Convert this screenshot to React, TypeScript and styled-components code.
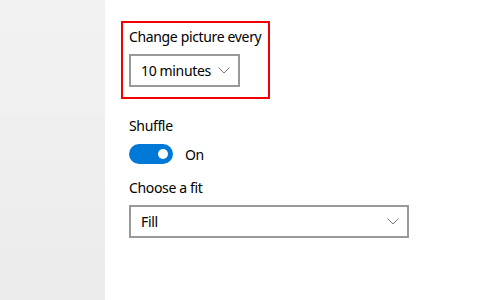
import React from "react"
import styled, { createGlobalStyle } from "styled-components"

const Global = createGlobalStyle`
  body {
    margin: 0;
    font-family: "Noto Sans", "Open Sans", sans-serif;
    letter-spacing: -0.35px;
    color: #000;
  }
`
const Page = styled.div`
  display: flex;
  width: 500px;
  height: 300px;
  overflow: hidden;
  background: #fff;
`
const Sidebar = styled.div`
  width: 105px;
  flex-shrink: 0;
  background: linear-gradient(180deg, #f2f2f3 0%, #eeeeef 60%, #ebebec 100%);
`
const Content = styled.div`
  display: flex;
  flex-direction: column;
  align-items: flex-start;
  padding: 21px 0 0 24px;
`
const FocusGroup = styled.div`
  display: flex;
  flex-direction: column;
  align-items: flex-start;
  box-sizing: border-box;
  width: 149px;
  margin-left: -8px;
  border: 2px solid #f00000;
  padding: 4px 0 10px 6px;
`
const Label = styled.div<{ $top?: number }>`
  font-size: 14px;
  line-height: 20px;
  white-space: nowrap;
  margin-top: ${(p) => p.$top ?? 0}px;
`
const Select = styled.div<{ $width: number }>`
  display: flex;
  align-items: center;
  justify-content: space-between;
  box-sizing: border-box;
  width: ${(p) => p.$width}px;
  height: 33px;
  margin-top: 7px;
  border: 2px solid #999;
  padding: 0 8px 0 10px;
  font-size: 14px;
  white-space: nowrap;
`
const Chevron = () => (
  <svg width="12" height="7" viewBox="0 0 12 7">
    <path d="M0.5 0.5 L6 6 L11.5 0.5" fill="none" stroke="#7a7a7a" strokeWidth="1" />
  </svg>
)
const ToggleRow = styled.div`
  display: flex;
  align-items: center;
  gap: 12px;
  margin-top: 8px;
  font-size: 14px;
`
const Toggle = styled.div`
  display: flex;
  align-items: center;
  justify-content: flex-end;
  box-sizing: border-box;
  width: 44px;
  height: 20px;
  border-radius: 10px;
  background: #0078d7;
  padding-right: 5px;
`
const Knob = styled.div`
  width: 10px;
  height: 10px;
  border-radius: 50%;
  background: #fff;
`

export default function App() {
  return (
    <Page>
      <Global />
      <Sidebar />
      <Content>
        <FocusGroup>
          <Label>Change picture every</Label>
          <Select $width={111}>
            <span>10 minutes</span>
            <Chevron />
          </Select>
        </FocusGroup>
        <Label $top={17}>Shuffle</Label>
        <ToggleRow>
          <Toggle>
            <Knob />
          </Toggle>
          <span>On</span>
        </ToggleRow>
        <Label $top={14}>Choose a fit</Label>
        <Select $width={280}>
          <span>Fill</span>
          <Chevron />
        </Select>
      </Content>
    </Page>
  )
}
